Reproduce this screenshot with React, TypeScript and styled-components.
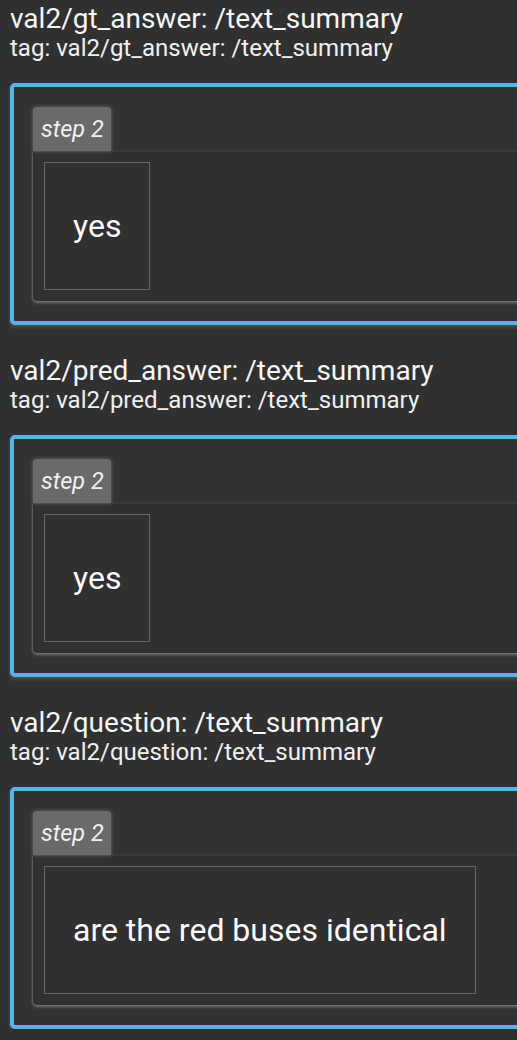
import React from "react";
import styled, { createGlobalStyle } from "styled-components";

const Global = createGlobalStyle`
  html, body {
    margin: 0;
    padding: 0;
    background: #303030;
    overflow: hidden;
  }
  body {
    font-family: Roboto, "Noto Sans", sans-serif;
    color: #ffffff;
  }
`;

const Page = styled.div`
  display: flex;
  flex-direction: column;
  gap: 30px;
  padding: 3px 0 0 10px;
  overflow: hidden;
`;

const Section = styled.section`
  display: flex;
  flex-direction: column;
`;

const Title = styled.div`
  font-size: 28px;
  line-height: 32px;
  white-space: nowrap;
  color: #f6f6f6;
`;

const Tag = styled.div`
  margin-top: 1px;
  font-size: 24px;
  line-height: 24px;
  white-space: nowrap;
  color: #f0f0f0;
`;

const Card = styled.div`
  margin-top: 23px;
  width: 620px;
  box-sizing: border-box;
  border: 4px solid #58b4e6;
  border-radius: 5px;
  padding: 20px 0 20px 19px;
  background: #323232;
  box-shadow: 0 2px 4px rgba(150, 150, 150, 0.35);
`;

const StepTab = styled.div`
  display: inline-block;
  background: #6a6a6a;
  border-radius: 4px 4px 0 0;
  padding: 0 7px 0 8px;
  height: 44px;
  line-height: 44px;
  font-size: 23.5px;
  font-style: italic;
  color: #f0f0f0;
  box-shadow: 0 0 4px rgba(150, 150, 150, 0.55);
`;

const Panel = styled.div`
  display: flex;
  background: #303030;
  border-top: 1px solid #383838;
  border-radius: 0 0 4px 4px;
  padding: 10px 11px 11px;
  box-shadow: 0 2px 3px rgba(170, 170, 170, 0.55), -1px 0 2px rgba(150, 150, 150, 0.35);
`;

const Cell = styled.div`
  border: 1px solid #676767;
  padding: 44px 28px;
  font-size: 32px;
  line-height: 38px;
  color: #fafafa;
  white-space: nowrap;
`;

const data = [
  { name: "val2/gt_answer", value: "yes" },
  { name: "val2/pred_answer", value: "yes" },
  { name: "val2/question", value: "are the red buses identical" },
];

export default function App() {
  return (
    <>
      <Global />
      <Page>
        {data.map((d) => (
          <Section key={d.name}>
            <Title>{d.name}: /text_summary</Title>
            <Tag>tag: {d.name}: /text_summary</Tag>
            <Card>
              <StepTab>step 2</StepTab>
              <Panel>
                <Cell>{d.value}</Cell>
              </Panel>
            </Card>
          </Section>
        ))}
      </Page>
    </>
  );
}
